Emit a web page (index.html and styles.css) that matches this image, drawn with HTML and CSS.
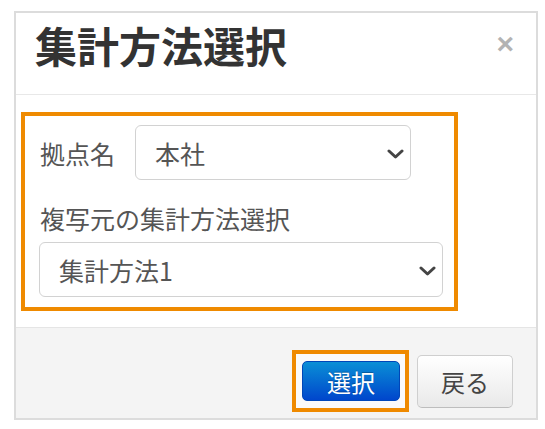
FILE: index.html
```html
<!DOCTYPE html>
<html lang="ja">
<head>
  <meta charset="UTF-8" />
  <meta name="viewport" content="width=device-width, initial-scale=1.0"/>
  <title>集計方法選択</title>
  <link rel="stylesheet" href="styles.css">
</head>
<body>
  <div class="modal">
    <div class="modal-header">
      <h3 class="modal-title">集計方法選択</h3>
      <span class="close">×</span>
    </div>

    <div class="modal-body">
      <div class="highlight">
        <div class="field-row">
          <label class="label">拠点名</label>
          <div class="select select-short">
            <span>本社</span>
            <svg class="chevron" width="17" height="10" viewBox="0 0 17 10">
              <path d="M2 2 L8.5 8 L15 2" fill="none" stroke="#444" stroke-width="3" stroke-linecap="round" stroke-linejoin="round"/>
            </svg>
          </div>
        </div>

        <label class="label label-block">複写元の集計方法選択</label>
        <div class="select select-wide">
          <span>集計方法1</span>
          <svg class="chevron" width="17" height="10" viewBox="0 0 17 10">
            <path d="M2 2 L8.5 8 L15 2" fill="none" stroke="#444" stroke-width="3" stroke-linecap="round" stroke-linejoin="round"/>
          </svg>
        </div>
      </div>
    </div>

    <div class="modal-footer">
      <div class="highlight-btn">
        <button class="btn btn-primary">選択</button>
      </div>
      <button class="btn btn-default">戻る</button>
    </div>
  </div>
</body>
</html>
```

FILE: styles.css
```css
* {
  box-sizing: border-box;
}
body {
  margin: 0;
  padding: 11px 0 0 14px;
  background: #fff;
  font-family: "Noto Sans CJK JP", "Noto Sans", sans-serif;
  color: #555;
}
.modal {
  width: 524px;
  border: 2px solid #dcdcdc;
  background: #fff;
}
.modal-header {
  height: 82px;
  display: flex;
  align-items: flex-start;
  justify-content: space-between;
  padding: 11px 22px 0 19px;
  border-bottom: 1px solid #e8e8e8;
}
.modal-title {
  margin: 0;
  font-size: 42px;
  line-height: 42px;
  font-weight: bold;
  color: #333;
}
.close {
  font-family: "Liberation Sans", Arial, sans-serif;
  font-size: 30px;
  line-height: 40px;
  font-weight: bold;
  color: #b3b3b3;
}
.modal-body {
  padding: 17px 0 16px 5px;
}
.highlight {
  width: 437px;
  border: 4px solid #ef8a00;
  padding: 9px 10px 10px 14px;
}
.field-row {
  display: flex;
  align-items: center;
  gap: 20px;
}
.label {
  font-size: 25px;
  line-height: 34px;
  color: #555;
  padding-left: 1px;
}
.label-block {
  display: block;
  margin: 21px 0 7px;
}
.select {
  height: 55px;
  display: flex;
  align-items: center;
  justify-content: space-between;
  border: 1.5px solid #d2d2d2;
  border-radius: 6px;
  background: #fff;
  padding: 0 6px 0 19px;
  font-size: 25px;
  color: #555;
}
.select-short {
  width: 276px;
}
.select-wide {
  width: 404px;
}
.chevron {
  display: block;
  margin-top: 2px;
}
.modal-footer {
  height: 91px;
  display: flex;
  align-items: center;
  justify-content: flex-end;
  gap: 8px;
  padding: 16px 23px 0 0;
  border-top: 1px solid #e5e5e5;
  background: #f4f4f4;
}
.highlight-btn {
  border: 4px solid #ef8a00;
  background: #fafafa;
  padding: 7px 5px 7px 6px;
}
.btn {
  font-family: "Noto Sans CJK JP", "Noto Sans", sans-serif;
  font-size: 24px;
  border-radius: 5px;
  cursor: pointer;
  padding: 0;
}
.btn-primary {
  display: block;
  width: 98px;
  height: 40px;
  color: #fff;
  border: 1px solid #0046b8;
  background: linear-gradient(to bottom, #0a8fd6, #0046cc);
  text-shadow: 0 -1px 0 rgba(0, 0, 0, 0.25);
}
.btn-default {
  width: 96px;
  height: 53px;
  color: #444;
  border: 1.5px solid #cfcfcf;
  border-bottom-color: #bdbdbd;
  background: linear-gradient(to bottom, #ffffff, #e9e9e9);
}
```
